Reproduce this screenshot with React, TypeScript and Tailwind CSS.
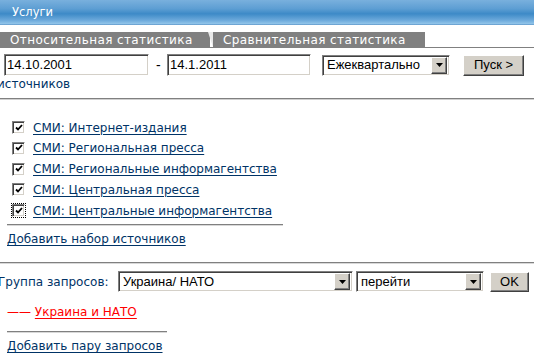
import React from "react";

const sunken =
  "border border-t-[#808080] border-l-[#808080] border-b-white border-r-white shadow-[inset_1px_1px_0_#404040,inset_-1px_-1px_0_#d4d0c8]";
const raised =
  "border border-t-white border-l-white border-b-[#404040] border-r-[#404040] shadow-[inset_-1px_-1px_0_#808080,inset_1px_1px_0_#d4d0c8] bg-[#d4d0c8]";

function Arrow() {
  return (
    <span className={`flex h-[17px] w-[16px] shrink-0 items-center justify-center ${raised}`}>
      <svg width="7" height="4" viewBox="0 0 7 4">
        <path d="M0 0h7L3.5 4z" fill="#000" />
      </svg>
    </span>
  );
}

function Select({ value, className }: { value: string; className: string }) {
  return (
    <div className={`flex h-[21px] items-center bg-white pl-[4px] pr-[2px] ${sunken} ${className}`}>
      <span className="flex-1 truncate font-['Liberation_Sans',Arial,sans-serif] text-[13px] text-black">{value}</span>
      <Arrow />
    </div>
  );
}

function Check({ focus }: { focus?: boolean }) {
  return (
    <span className={`flex h-[13px] w-[13px] shrink-0 items-center justify-center bg-white ${sunken} ${focus ? "outline outline-1 outline-dotted outline-black" : ""}`}>
      <svg width="8" height="8" viewBox="0 0 8 8">
        <path d="M1 3.5l2 2 4-4.5" stroke="#000" strokeWidth="1.8" fill="none" />
      </svg>
    </span>
  );
}

const sources = [
  "СМИ: Интернет-издания",
  "СМИ: Региональная пресса",
  "СМИ: Региональные информагентства",
  "СМИ: Центральная пресса",
  "СМИ: Центральные информагентства",
];

export default function App() {
  return (
    <div className="h-[361px] w-[534px] overflow-hidden bg-white font-['DejaVu_Sans',Verdana,sans-serif] text-[12px] text-[#003366]">
      <div className="flex h-[25px] items-center bg-[linear-gradient(to_bottom,#79b0dd_0%,#5d9ed3_35%,#3d8ac7_55%,#6aa8da_80%,#93c6ea_96%,#4a85bd_100%)] pl-[12px] text-[11.5px] text-white">
        Услуги
      </div>

      <div className="mt-[7px] flex h-[16px] whitespace-nowrap border-b border-[#808080] text-[12px] tracking-[0.4px] text-white">
        <div className="relative flex h-[15px] w-[210px] items-center bg-[#808080] pl-[10px]">
          Относительная статистика
          <span className="absolute right-[-3px] top-0 h-0 w-0 border-l-[5px] border-t-[15px] border-l-transparent border-t-[#e8e8e8]" />
        </div>
        <div className="ml-[3px] flex h-[15px] w-[212px] items-center bg-[#808080] pl-[10px]">
          Сравнительная статистика
        </div>
      </div>

      <div className="mt-[6px] flex items-center">
        <div className={`ml-[4px] flex h-[22px] w-[145px] items-center bg-white pl-[2px] font-['Liberation_Sans',Arial,sans-serif] text-[13px] text-black ${sunken}`}>
          14.10.2001
        </div>
        <span className="ml-[7px] w-[11px] font-['Liberation_Sans',Arial,sans-serif] text-[14px] text-black">-</span>
        <div className={`flex h-[22px] w-[144px] items-center bg-white pl-[2px] font-['Liberation_Sans',Arial,sans-serif] text-[13px] text-black ${sunken}`}>
          14.1.2011
        </div>
        <Select value="Ежеквартально" className="ml-[11px] w-[128px]" />
        <button className={`ml-[13px] flex h-[21px] w-[61px] items-center justify-center font-['Liberation_Sans',Arial,sans-serif] text-[13px] text-black ${raised}`}>
          Пуск &gt;
        </button>
      </div>

      <div className="ml-[-3px] mt-[1px] h-[14px] leading-[14px]">источников</div>

      <div className="mt-[7px] h-[2px] border-t border-[#808080] bg-[#d0d0d0]" />

      <div className="mt-[20px] flex flex-col gap-[5.75px] pl-[12px]">
        {sources.map((s, i) => (
          <div key={s} className="flex h-[15px] items-center">
            <Check focus={i === 4} />
            <a className="ml-[8px] underline decoration-1 underline-offset-2">{s}</a>
          </div>
        ))}
      </div>

      <div className="ml-[7px] mt-[6px] h-[2px] w-[276px] border-t border-[#808080] bg-[#d8d8d8]" />
      <div className="ml-[7px] mt-[5px] leading-[16px]">
        <a className="underline decoration-1 underline-offset-2">Добавить набор источников</a>
      </div>

      <div className="mt-[15px] h-[2px] border-t border-[#808080] bg-[#d8d8d8]" />

      <div className="mt-[7px] flex items-center">
        <span className="ml-[-2px] w-[120px]">Группа запросов:</span>
        <Select value="Украина/ НАТО" className="w-[235px]" />
        <Select value="перейти" className="ml-[3px] w-[128px]" />
        <button className={`ml-[6px] flex h-[20px] w-[39px] items-center justify-center font-['Liberation_Sans',Arial,sans-serif] text-[13px] text-black ${raised}`}>
          OK
        </button>
      </div>

      <div className="ml-[7px] mt-[12px] leading-[16px] text-[#ff0000]">
        —— <a className="underline decoration-1 underline-offset-2">Украина и НАТО</a>
      </div>
      <div className="ml-[7px] mt-[11px] h-[2px] w-[160px] border-t border-[#808080] bg-[#d8d8d8]" />
      <div className="ml-[7px] mt-[5px] leading-[16px]">
        <a className="underline decoration-1 underline-offset-2">Добавить пару запросов</a>
      </div>
    </div>
  );
}
